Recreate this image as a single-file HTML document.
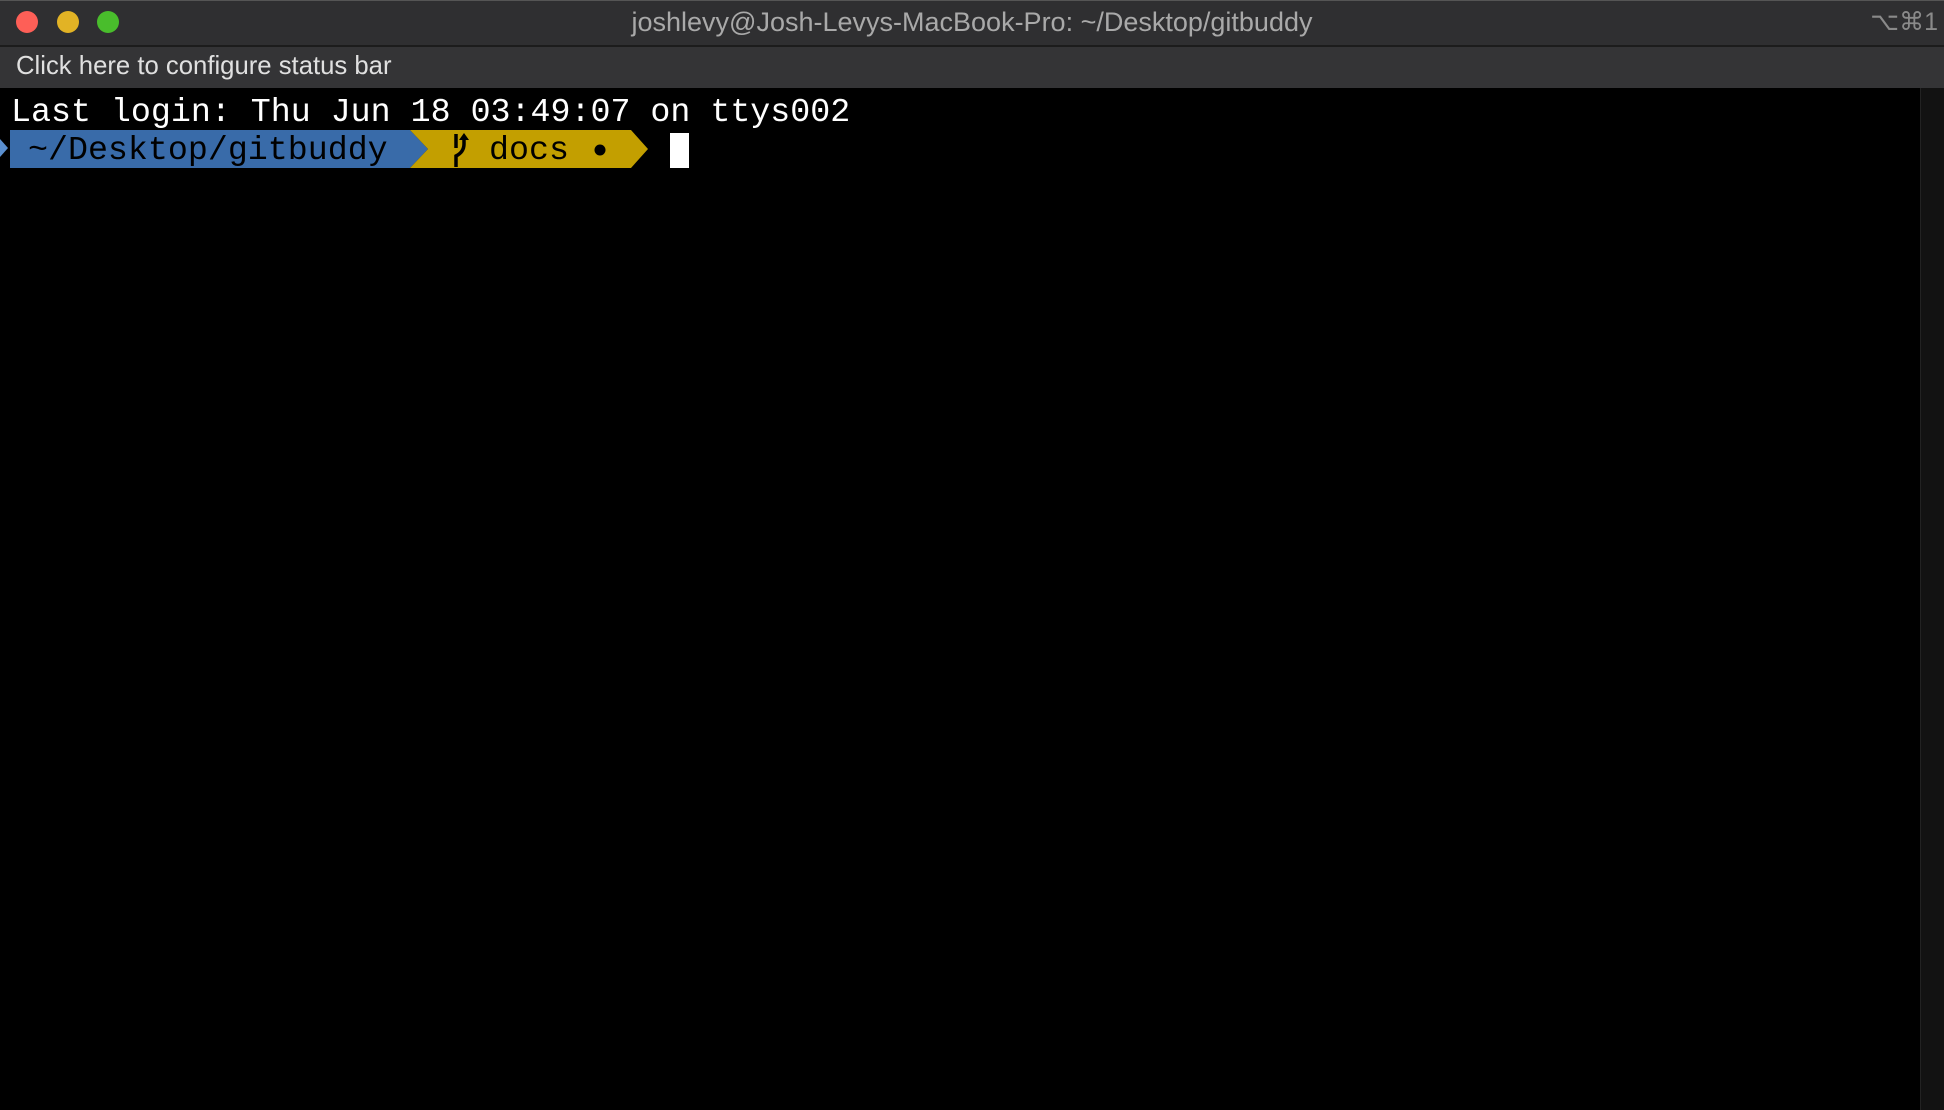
<!DOCTYPE html>
<html><head><style>
body{margin:0;width:1944px;height:1110px;background:#000;overflow:hidden;position:relative;font-family:"Liberation Sans",sans-serif}
.a{position:absolute}
.mono{font-family:"Liberation Mono",monospace;font-size:33.3px;white-space:pre;line-height:38px}
</style></head><body>
<div class="a" style="left:0;top:0;width:1944px;height:45px;background:#2f2f31;border-top:1px solid #555"></div>
<div class="a" style="left:0;top:45px;width:1944px;height:2px;background:#1c1c1c"></div>
<div class="a" style="left:0;top:47px;width:1944px;height:41px;background:#343436"></div>
<div class="a" style="left:16px;top:11px;width:22px;height:22px;border-radius:50%;background:#fe5f57"></div>
<div class="a" style="left:57px;top:11px;width:22px;height:22px;border-radius:50%;background:#e2b325"></div>
<div class="a" style="left:97px;top:11px;width:22px;height:22px;border-radius:50%;background:#49bd2c"></div>
<div class="a" style="left:0;width:1944px;top:7px;text-align:center;color:#a9a9a9;font-size:27px;line-height:30px">joshlevy@Josh-Levys-MacBook-Pro: ~/Desktop/gitbuddy</div>
<div class="a" style="right:6px;top:7px;color:#8a8a8a;font-size:25px;line-height:30px">⌥⌘1</div>
<div class="a" style="left:16px;top:51px;color:#e0e0e0;font-size:25.7px;line-height:30px">Click here to configure status bar</div>
<div class="a" style="left:1920px;top:88px;width:24px;height:1022px;background:#121212;border-left:1px solid #222"></div>
<div class="a mono" style="left:11px;top:93px;color:#fff">Last login: Thu Jun 18 03:49:07 on ttys002</div>
<svg class="a" style="left:0;top:130px" width="700" height="38">
<polygon points="0,9 8,18 0,27" fill="#5a8fd0"/>
<polygon points="10,0 410,0 428,19 410,38 10,38" fill="#396ba9"/>
<polygon points="410,0 631,0 648,19 631,38 410,38 428,19" fill="#c39f00"/>
<rect x="670" y="3" width="19" height="35" fill="#fff"/>
<path d="M456 4V18" stroke="#000" stroke-width="3.5" fill="none"/>
<path d="M464 8V14Q464 22 456 26V37" stroke="#000" stroke-width="3.5" fill="none"/>
<polygon points="459,10 464,3 469,10" fill="#000"/>
<circle cx="600" cy="20" r="5.5" fill="#000"/>
</svg>
<div class="a mono" style="left:28px;top:131px;color:#000">~/Desktop/gitbuddy</div>
<div class="a mono" style="left:489px;top:131px;color:#000">docs</div>
</body></html>
